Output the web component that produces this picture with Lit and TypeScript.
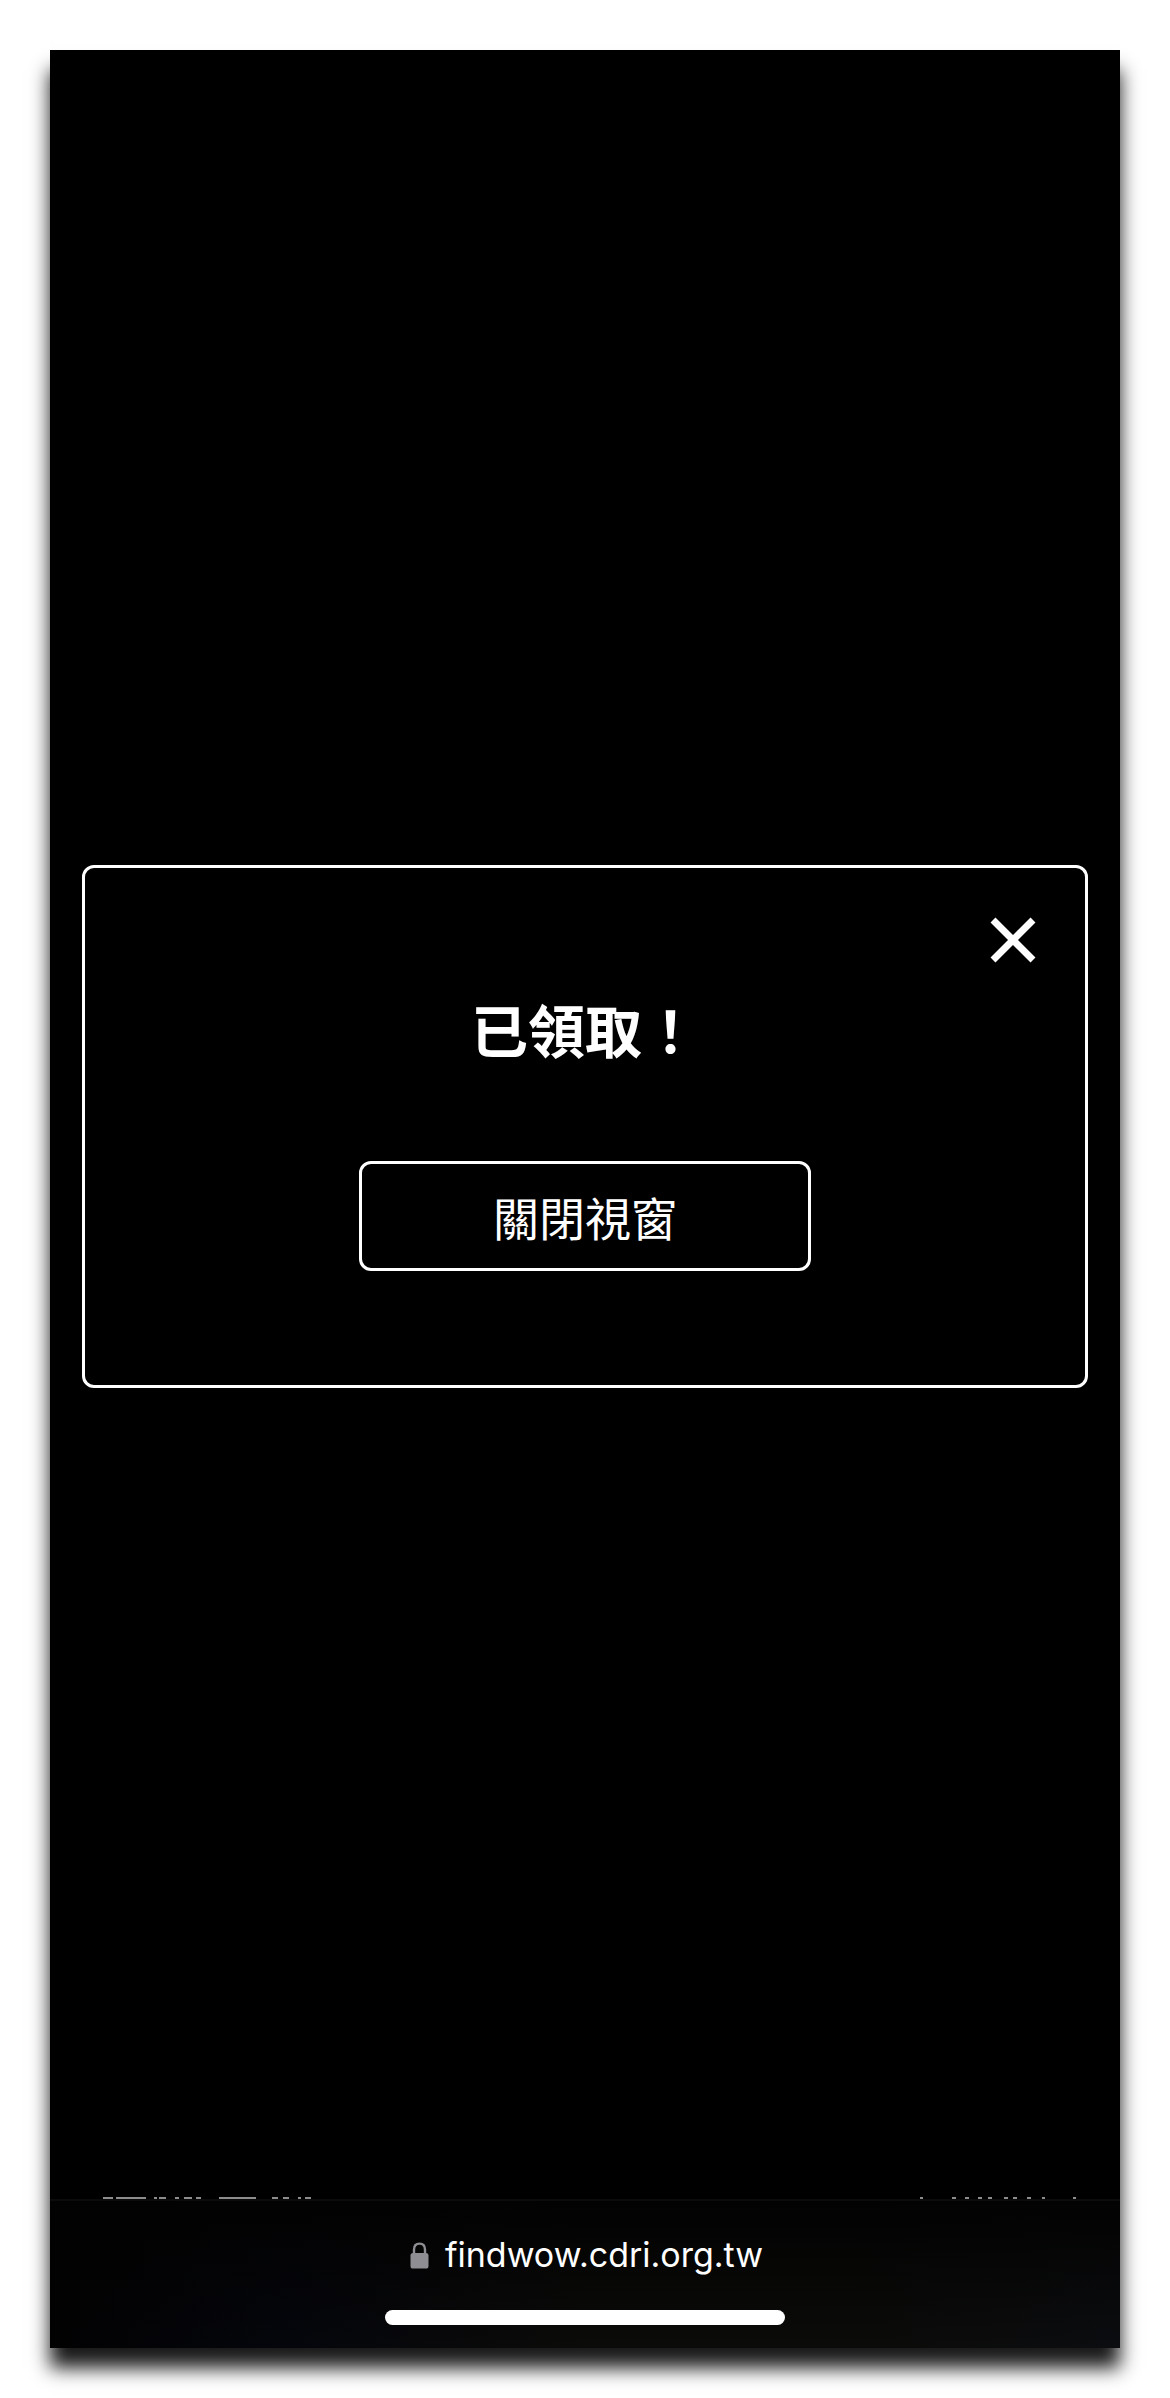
import { LitElement, html, css, svg } from "lit";
import { customElement, property, state } from "lit/decorators.js";

/** Modal card with a title, a close icon and one action button. */
@customElement("message-dialog")
class MessageDialog extends LitElement {
  @property() heading = "";
  @property() action = "";

  static styles = css`
    :host {
      display: block;
    }
    .card {
      box-sizing: border-box;
      display: flex;
      flex-direction: column;
      align-items: center;
      border: 3px solid #fff;
      border-radius: 12px;
      padding: 48px 48px 114px;
      background: #000;
      color: #fff;
    }
    button {
      font-family: inherit;
      color: inherit;
      background: none;
      margin: 0;
      cursor: pointer;
    }
    .close {
      align-self: flex-end;
      display: block;
      border: 0;
      padding: 0;
      line-height: 0;
    }
    .close svg {
      width: 48px;
      height: 48px;
    }
    .heading {
      margin: 24px 0 0;
      font-size: 57px;
      line-height: 80px;
      font-weight: 700;
      text-align: center;
    }
    .action {
      box-sizing: border-box;
      width: 452px;
      max-width: 100%;
      margin-top: 93px;
      border: 3px solid #fff;
      border-radius: 12px;
      padding: 19px 24px;
      font-size: 46px;
      line-height: 66px;
      font-weight: 400;
    }
  `;

  private close() {
    this.dispatchEvent(new CustomEvent("dismiss", { bubbles: true, composed: true }));
  }

  render() {
    return html`
      <div class="card" role="dialog" aria-labelledby="heading">
        <button class="close" type="button" aria-label="關閉" @click=${this.close}>
          <svg viewBox="0 0 48 48" aria-hidden="true">
            <path d="M4 4 44 44M44 4 4 44" fill="none" stroke="#fff" stroke-width="7" />
          </svg>
        </button>
        <h1 class="heading" id="heading">${this.heading}</h1>
        <button class="action" type="button" @click=${this.close}>${this.action}</button>
      </div>
    `;
  }
}

/** Collapsed browser bar: padlock, host name and the home indicator. */
@customElement("address-bar")
class AddressBar extends LitElement {
  @property() host = "";

  static styles = css`
    :host {
      display: block;
    }
    .bar {
      display: flex;
      flex-direction: column;
      align-items: center;
      border-top: 2px solid #0b0b0b;
      padding: 33px 0 23px;
      background: linear-gradient(to bottom, #020202, transparent),
        linear-gradient(to right, #020203, #05060c 22%, #0b0b09 50%, #0b0b09 75%, #0c0d10);
    }
    .site {
      display: flex;
      align-items: center;
      gap: 16px;
      padding-left: 3px;
      color: #fff;
      font-family: Inter, "Liberation Sans", sans-serif;
      font-size: 34px;
      line-height: 42px;
      text-decoration: none;
    }
    .lock {
      width: 19px;
      height: 27px;
    }
    .home {
      width: 400px;
      max-width: 60%;
      height: 15px;
      margin-top: 34px;
      border-radius: 8px;
      background: #fff;
    }
  `;

  render() {
    return html`
      <div class="bar">
        <a class="site" href="#">
          <svg class="lock" viewBox="0 0 19 27" aria-hidden="true">
            <path d="M4 13V7.5C4 3.8 6.2 1.6 9.5 1.6S15 3.8 15 7.5V13" fill="none" stroke="#8e8e93" stroke-width="2.4" />
            <rect x="0.5" y="11" width="18" height="15.5" rx="2.6" fill="#8e8e93" />
          </svg>
          <span>${this.host}</span>
        </a>
        <div class="home"></div>
      </div>
    `;
  }
}

/** Stroke tops of the covered page's last line: [start, length] pairs. */
const LEFT_STROKES = [
  [53, 10], [66, 30], [104, 3], [109, 7], [125, 4], [134, 8], [146, 5],
  [169, 37], [222, 6], [233, 6], [248, 3], [255, 6],
];
const RIGHT_STROKES = [
  [0, 3], [32, 4], [45, 4], [58, 4], [68, 4], [84, 4], [93, 4], [107, 4], [122, 3], [153, 3],
];

const strokes = (list: number[][]) =>
  list.map(([x, w]) => svg`<rect x=${x} y="0" width=${w} height="2" fill="#8c8c8c" />`);

@customElement("app-root")
class AppRoot extends LitElement {
  @state() private open = true;

  static styles = css`
    :host {
      display: block;
      box-sizing: border-box;
      min-height: 100vh;
      padding: 50px;
      background: #fff;
      font-family: "Noto Sans CJK TC", sans-serif;
    }
    .screen {
      display: flex;
      flex-direction: column;
      min-height: calc(100vh - 100px);
      background: #000;
      box-shadow: 0 20px 18px rgba(0, 0, 0, 0.9);
    }
    .page {
      flex: 1;
      display: flex;
      flex-direction: column;
      justify-content: center;
      padding: 6px 32px 0;
    }
    .covered {
      display: flex;
      justify-content: space-between;
      padding-right: 42px;
    }
    .covered svg {
      display: block;
      height: 2px;
    }
  `;

  render() {
    return html`
      <div class="screen">
        <main class="page">
          ${this.open
            ? html`<message-dialog
                heading="已領取！"
                action="關閉視窗"
                @dismiss=${() => (this.open = false)}
              ></message-dialog>`
            : null}
        </main>
        <div class="covered" aria-hidden="true">
          <svg width="262" viewBox="0 0 262 2">${strokes(LEFT_STROKES)}</svg>
          <svg width="158" viewBox="0 0 158 2">${strokes(RIGHT_STROKES)}</svg>
        </div>
        <address-bar host="findwow.cdri.org.tw"></address-bar>
      </div>
    `;
  }
}
